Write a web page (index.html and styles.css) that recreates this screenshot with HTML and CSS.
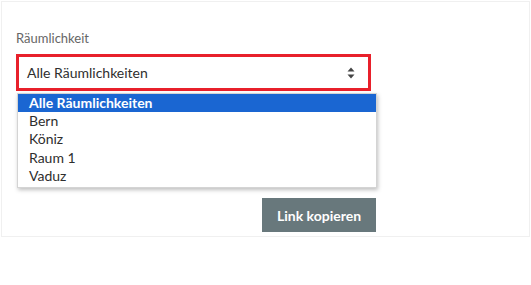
FILE: index.html
```html
<!DOCTYPE html>
<html lang="de">
<head>
  <meta charset="UTF-8" />
  <meta name="viewport" content="width=device-width, initial-scale=1.0">
  <title>Räumlichkeit</title>
  <link rel="stylesheet" href="styles.css">
</head>
<body>

<div class="card">
  <div class="form">
    <div class="field">
      <label class="label">Räumlichkeit</label>
      <div class="select">
        <span class="value">Alle Räumlichkeiten</span>
        <svg class="caret" width="8" height="12" viewBox="0 0 8 12">
          <path d="M4 0.5 L7.5 4.5 H0.5 Z M4 11.5 L7.5 7.5 H0.5 Z" fill="#444"/>
        </svg>
      </div>
      <ul class="options">
        <li class="option selected">Alle Räumlichkeiten</li>
        <li class="option">Bern</li>
        <li class="option">Köniz</li>
        <li class="option">Raum 1</li>
        <li class="option">Vaduz</li>
      </ul>
    </div>

    <div class="actions">
      <button class="btn">Link kopieren</button>
    </div>
  </div>
</div>

</body>
</html>
```

FILE: styles.css
```css
* { margin: 0; padding: 0; box-sizing: border-box; }
html, body {
  background: #fff;
  font-family: Lato, "Open Sans", sans-serif;
  color: #333;
}

.card {
  margin: 1px 1px 0 1px;
  border: 1px solid #f0f0f0;
  padding: 27px 14px 4px;
}

.form {
  width: 360px;
}

.field {
  position: relative;
}

.label {
  display: block;
  font-size: 13px;
  line-height: 18px;
  color: #666;
  margin-bottom: 7px;
}

.select {
  width: 355px;
  height: 37px;
  border: 3px solid #e8202b;
  background: #fff;
  display: flex;
  align-items: center;
  justify-content: space-between;
  padding: 0 13px 0 8px;
}

.value {
  font-size: 14px;
  color: #2e2e2e;
}

.options {
  position: absolute;
  top: 64px;
  left: 1px;
  width: 360px;
  list-style: none;
  background: #fff;
  border: 1px solid #d4d4d4;
  box-shadow: 1px 2px 4px rgba(0,0,0,0.25);
  padding-bottom: 2px;
  z-index: 10;
}

.option {
  font-size: 14px;
  line-height: 18.2px;
  padding-left: 11px;
  color: #2e2e2e;
}

.option.selected {
  background: #1a66d2;
  color: #fff;
  font-weight: bold;
}

.actions {
  display: flex;
  justify-content: flex-end;
  margin-top: 107px;
}

.btn {
  height: 34px;
  width: 114px;
  border: none;
  background: #68787c;
  color: #fff;
  font-family: Lato, "Open Sans", sans-serif;
  font-size: 14px;
  font-weight: bold;
}
```
